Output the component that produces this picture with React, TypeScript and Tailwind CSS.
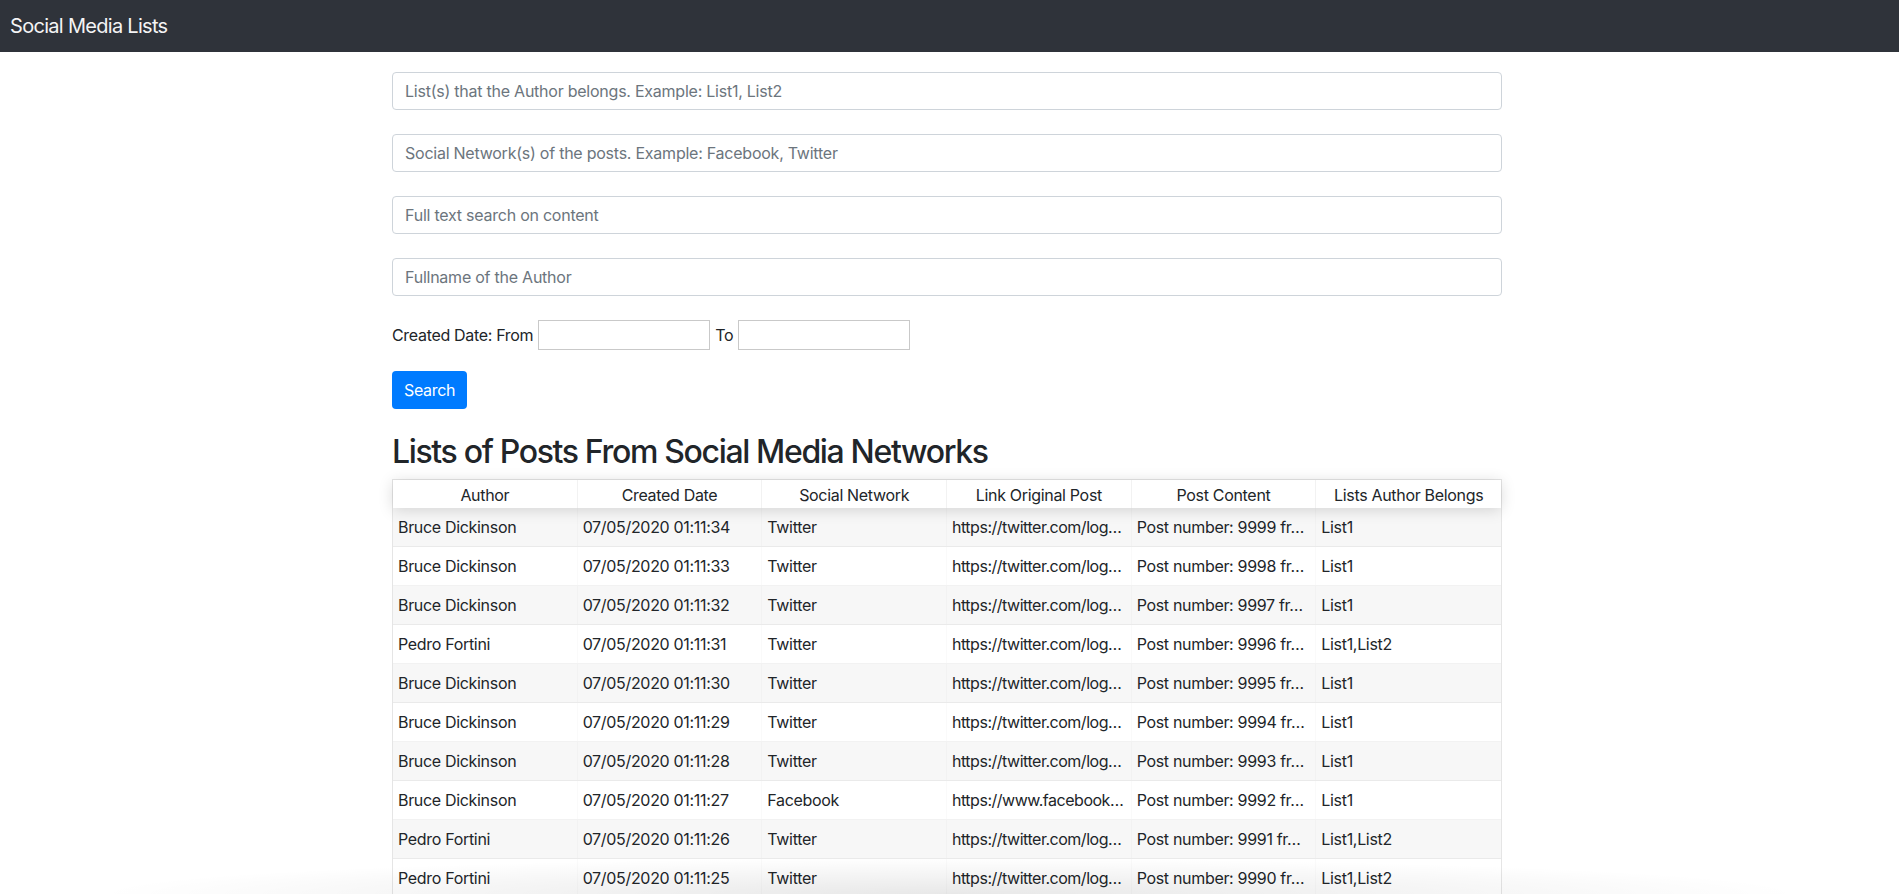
import React from "react";

type Row = {
  author: string;
  date: string;
  network: string;
  link: string;
  content: string;
  lists: string;
};

const rows: Row[] = [
  ["Bruce Dickinson", "34", "Twitter", "9999", "List1"],
  ["Bruce Dickinson", "33", "Twitter", "9998", "List1"],
  ["Bruce Dickinson", "32", "Twitter", "9997", "List1"],
  ["Pedro Fortini", "31", "Twitter", "9996", "List1,List2"],
  ["Bruce Dickinson", "30", "Twitter", "9995", "List1"],
  ["Bruce Dickinson", "29", "Twitter", "9994", "List1"],
  ["Bruce Dickinson", "28", "Twitter", "9993", "List1"],
  ["Bruce Dickinson", "27", "Facebook", "9992", "List1"],
  ["Pedro Fortini", "26", "Twitter", "9991", "List1,List2"],
  ["Pedro Fortini", "25", "Twitter", "9990", "List1,List2"],
].map(([author, sec, network, num, lists]) => ({
  author,
  date: `07/05/2020 01:11:${sec}`,
  network,
  link: network === "Facebook" ? "https://www.facebook…" : "https://twitter.com/log…",
  content: `Post number: ${num} fr…`,
  lists,
}));

const headers = [
  "Author",
  "Created Date",
  "Social Network",
  "Link Original Post",
  "Post Content",
  "Lists Author Belongs",
];

export default function App() {
  return (
    <div className="relative h-screen overflow-hidden bg-white text-[#212529] font-[Inter,'Noto_Sans',sans-serif] text-base tracking-[-0.02em]">
      <nav className="h-[52px] bg-[#2f333a] flex items-center px-[10px]">
        <span className="text-[20px] leading-[30px] text-[#f4f4f5] tracking-[-0.035em]">Social Media Lists</span>
      </nav>

      <main className="ml-[392px] w-[1110px] pt-[20px]">
        <div className="flex flex-col gap-[24px]">
          {[
            "List(s) that the Author belongs. Example: List1, List2",
            "Social Network(s) of the posts. Example: Facebook, Twitter",
            "Full text search on content",
            "Fullname of the Author",
          ].map((p) => (
            <input
              key={p}
              placeholder={p}
              className="block w-full h-[38px] px-3 border border-[#ced4da] rounded-[4px] text-base tracking-[-0.015em] text-[#495057] placeholder:text-[#6c757d] outline-none"
            />
          ))}

          <div className="flex items-center gap-[5px] h-[30px]">
            <span className="leading-6">Created Date: From</span>
            <input className="w-[172px] h-[30px] border border-[#c9c9c9] outline-none" />
            <span className="leading-6">To</span>
            <input className="w-[172px] h-[30px] border border-[#c9c9c9] outline-none" />
          </div>
        </div>

        <button className="mt-[21px] h-[38px] px-3 rounded-[4px] bg-[#007bff] text-white text-base leading-6 tracking-[-0.02em]">
          Search
        </button>

        <h2 className="mt-[24px] mb-2 text-[32px] leading-[38px] font-medium text-[#212529] tracking-[-0.042em]">
          Lists of Posts From Social Media Networks
        </h2>

        <div className="border border-[rgba(0,0,0,0.1)]">
          <div className="relative z-10 grid grid-cols-6 bg-white shadow-[0_2px_15px_0_rgba(0,0,0,0.15)]">
            {headers.map((h, i) => (
              <div
                key={h}
                className={`h-[28px] pt-[6px] px-[5px] text-center leading-[19px] truncate ${
                  i < 5 ? "border-r border-[rgba(0,0,0,0.05)]" : ""
                }`}
              >
                {h}
              </div>
            ))}
          </div>
          <div>
            {rows.map((r, idx) => (
              <div
                key={idx}
                className={`grid grid-cols-6 h-[39px] border-b border-[rgba(0,0,0,0.05)] ${
                  idx % 2 === 0 ? "bg-[rgba(0,0,0,0.03)]" : "bg-white"
                }`}
              >
                {[r.author, r.date, r.network, r.link, r.content, r.lists].map((c, i) => (
                  <div
                    key={i}
                    className={`py-[7px] px-[5px] leading-6 whitespace-nowrap overflow-hidden ${
                      i === 3 ? "tracking-[-0.03em]" : ""
                    } ${i < 5 ? "border-r border-[rgba(0,0,0,0.02)]" : ""}`}
                  >
                    {c}
                  </div>
                ))}
              </div>
            ))}
          </div>
        </div>
      </main>

      <div className="pointer-events-none absolute left-0 right-0 bottom-0 h-[36px] bg-[radial-gradient(ellipse_45%_100%_at_50%_100%,rgba(0,0,0,0.09),rgba(0,0,0,0))]" />
    </div>
  );
}
